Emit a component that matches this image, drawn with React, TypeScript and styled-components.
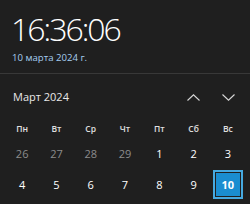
import styled, { createGlobalStyle } from "styled-components";

const GlobalStyle = createGlobalStyle`
html, body {
  margin: 0;
  padding: 0;
  background: #1f1f1f;
}
body {
  font-family: "Open Sans", "Noto Sans", sans-serif;
  color: #ffffff;
}
`;

const Panel = styled.div`
width: 250px;
height: 204px;
background: #1f1f1f;
display: flex;
flex-direction: column;
overflow: hidden;
`;

const Header = styled.div`
display: flex;
flex-direction: column;
box-sizing: border-box;
padding: 10px 12px 0 11px;
height: 74px;
border-bottom: 1px solid #383838;
`;

const Clock = styled.div`
font-size: 32px;
font-weight: 300;
line-height: 38px;
letter-spacing: -2px;
color: #ffffff;
`;

const DateLink = styled.div`
font-size: 9.6px;
line-height: 14px;
margin-top: 3px;
margin-left: 1px;
color: #a5cdf0;
`;

const MonthBar = styled.div`
display: flex;
align-items: center;
justify-content: space-between;
padding: 0 14px 0 13px;
height: 44px;
`;

const MonthTitle = styled.div`
font-size: 11px;
color: #e8e8e8;
`;

const NavButtons = styled.div`
display: flex;
gap: 19px;
margin-top: 2px;
`;

const NavButton = styled.div`
width: 16px;
height: 16px;
display: flex;
align-items: center;
justify-content: center;
`;

const Grid = styled.div`
display: grid;
grid-template-columns: repeat(7, 1fr);
grid-template-rows: 20px;
grid-auto-rows: 31px;
padding: 0 5px;
`;

const WeekDay = styled.div`
display: flex;
align-items: center;
justify-content: center;
font-size: 8.5px;
font-weight: 600;
color: #e0e0e0;
`;

const Day = styled.div<{ $muted?: boolean; $today?: boolean }>`
display: flex;
align-items: center;
justify-content: center;
font-size: 11px;
font-weight: ${(p) => (p.$today ? 700 : 400)};
color: ${(p) => (p.$muted ? "#8c8c8c" : "#ffffff")};
box-sizing: border-box;
margin: 1px 2px;
${(p) =>
  p.$today &&
  `
  background: #1a8dd0;
  border: 2px solid #46a9e0;
  box-shadow: inset 0 0 0 1px #1f1f1f;
  `}
`;

const weekDays = ["Пн", "Вт", "Ср", "Чт", "Пт", "Сб", "Вс"];
const days: { n: number; muted?: boolean; today?: boolean }[] = [
  { n: 26, muted: true },
  { n: 27, muted: true },
  { n: 28, muted: true },
  { n: 29, muted: true },
  { n: 1 },
  { n: 2 },
  { n: 3 },
  { n: 4 },
  { n: 5 },
  { n: 6 },
  { n: 7 },
  { n: 8 },
  { n: 9 },
  { n: 10, today: true },
];

export default function App() {
  return (
    <Panel>
      <GlobalStyle />
      <Header>
        <Clock>16:36:06</Clock>
        <DateLink>10 марта 2024 г.</DateLink>
      </Header>
      <MonthBar>
        <MonthTitle>Март 2024</MonthTitle>
        <NavButtons>
          <NavButton>
            <svg width="13" height="7" viewBox="0 0 13 7">
              <path d="M0.5 6.5 L6.5 0.8 L12.5 6.5" fill="none" stroke="#d8d8d8" strokeWidth="1.1" />
            </svg>
          </NavButton>
          <NavButton>
            <svg width="13" height="7" viewBox="0 0 13 7">
              <path d="M0.5 0.5 L6.5 6.2 L12.5 0.5" fill="none" stroke="#d8d8d8" strokeWidth="1.1" />
            </svg>
          </NavButton>
        </NavButtons>
      </MonthBar>
      <Grid>
        {weekDays.map((d) => (
          <WeekDay key={d}>{d}</WeekDay>
        ))}
        {days.map((d) => (
          <Day key={d.n} $muted={d.muted} $today={d.today}>
            {d.n}
          </Day>
        ))}
      </Grid>
    </Panel>
  );
}
